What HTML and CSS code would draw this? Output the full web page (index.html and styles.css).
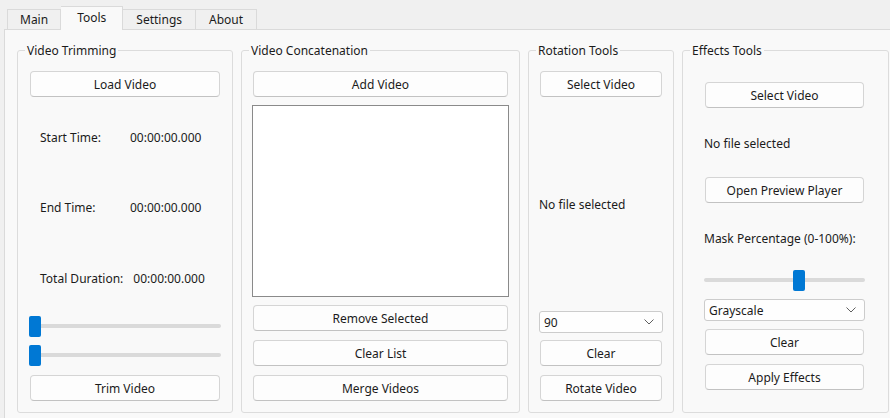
FILE: index.html
```html
<!DOCTYPE html>
<html lang="en">
<head>
  <meta charset="UTF-8" />
  <meta name="viewport" content="width=device-width, initial-scale=1.0"/>
  <title>Video Tools</title>
  <link rel="stylesheet" href="styles.css">
</head>
<body>
  <div class="window">
    <div class="tabbar">
      <div class="tab">Main</div>
      <div class="tab active">Tools</div>
      <div class="tab">Settings</div>
      <div class="tab">About</div>
    </div>

    <div class="pane">
      <div class="groups">

        <fieldset class="group g-trim">
          <legend>Video Trimming</legend>
          <div class="group-body">
            <div class="btn load">Load Video</div>
            <div class="time-row start"><span class="lbl">Start Time:</span><span>00:00:00.000</span></div>
            <div class="time-row end"><span class="lbl">End Time:</span><span>00:00:00.000</span></div>
            <div class="time-row total"><span class="lbl">Total Duration:</span><span>00:00:00.000</span></div>
            <div class="slider s1"><div class="groove"></div><div class="handle" style="left: 0px"></div></div>
            <div class="slider s2"><div class="groove"></div><div class="handle" style="left: 0px"></div></div>
            <div class="btn trim">Trim Video</div>
          </div>
        </fieldset>

        <fieldset class="group g-concat">
          <legend>Video Concatenation</legend>
          <div class="group-body">
            <div class="btn add">Add Video</div>
            <div class="list"></div>
            <div class="btn remove">Remove Selected</div>
            <div class="btn clear-list">Clear List</div>
            <div class="btn merge">Merge Videos</div>
          </div>
        </fieldset>

        <fieldset class="group g-rot">
          <legend>Rotation Tools</legend>
          <div class="group-body">
            <div class="btn select">Select Video</div>
            <div class="status">No file selected</div>
            <div class="combo">
              <span>90</span>
              <svg width="10" height="6" viewBox="0 0 10 6"><path d="M0.5 0.5 L5 5 L9.5 0.5" fill="none" stroke="#5f5f5f" stroke-width="1"/></svg>
            </div>
            <div class="btn clear">Clear</div>
            <div class="btn rotate">Rotate Video</div>
          </div>
        </fieldset>

        <fieldset class="group g-fx">
          <legend>Effects Tools</legend>
          <div class="group-body">
            <div class="btn select">Select Video</div>
            <div class="status">No file selected</div>
            <div class="btn preview">Open Preview Player</div>
            <div class="mask-label">Mask Percentage (0-100%):</div>
            <div class="slider mask"><div class="groove"></div><div class="handle" style="left: 89px"></div></div>
            <div class="combo">
              <span>Grayscale</span>
              <svg width="10" height="6" viewBox="0 0 10 6"><path d="M0.5 0.5 L5 5 L9.5 0.5" fill="none" stroke="#5f5f5f" stroke-width="1"/></svg>
            </div>
            <div class="btn clear">Clear</div>
            <div class="btn apply">Apply Effects</div>
          </div>
        </fieldset>

      </div>
    </div>
  </div>
</body>
</html>
```

FILE: styles.css
```css
html, body {
  margin: 0;
  background: #f0f0f0;
  font-family: "Noto Sans", "Open Sans", sans-serif;
  font-size: 12px;
  color: #1b1b1b;
}
.window {
  height: 418px;
  overflow: hidden;
  padding-top: 6px;
  box-sizing: border-box;
}

/* tabs */
.tabbar {
  display: flex;
  align-items: flex-end;
  height: 23px;
  padding-left: 7px;
  position: relative;
  z-index: 1;
}
.tab {
  height: 20px;
  line-height: 20px;
  padding: 0 13px;
  box-sizing: border-box;
  border: 1px solid #dadada;
  border-bottom: none;
  border-left: none;
  background: #f0f0f0;
}
.tab:first-child {
  border-left: 1px solid #dadada;
  padding: 0 12px;
}
.tab.active {
  height: 24px;
  line-height: 22px;
  margin-bottom: -1px;
  padding: 0 16px;
  background: #f9f9f9;
}

.pane {
  margin-left: 4px;
  border-top: 1px solid #dadada;
  border-left: 1px solid #dadada;
  background: #f9f9f9;
  height: 400px;
  padding: 12px 0 0 12px;
}
.groups {
  display: flex;
  gap: 8px;
  height: 371px;
}

/* group boxes */
.group {
  flex: none;
  margin: 0;
  padding: 0;
  min-width: 0;
  box-sizing: border-box;
  border: 1px solid #dcdcdc;
  border-radius: 3px;
}
.group legend {
  margin-left: 7px;
  padding: 0 2px;
  height: 16px;
  line-height: 17px;
}
.group-body {
  display: flex;
  flex-direction: column;
}
.g-trim { width: 216px; }
.g-concat { width: 279px; }
.g-rot { width: 146px; }
.g-fx { width: 207px; }

.g-trim .group-body { padding: 0 12px; }
.g-concat .group-body { padding: 0 11px; }
.g-rot .group-body { padding: 0 11px; }
.g-fx .group-body { padding: 0 24px 0 22px; }

/* controls */
.btn {
  height: 26px;
  box-sizing: border-box;
  border: 1px solid #d5d5d5;
  border-bottom-color: #c2c2c2;
  border-radius: 4px;
  background: #fdfdfd;
  display: flex;
  align-items: center;
  justify-content: center;
}
.time-row {
  display: flex;
  padding-left: 10px;
  height: 16px;
  line-height: 18px;
}
.time-row .lbl {
  min-width: 80px;
  padding-right: 10px;
}
.slider {
  position: relative;
  height: 21px;
  padding-top: 8px;
  box-sizing: border-box;
  margin: 0 -1px;
}
.groove {
  height: 4px;
  background: #dadada;
  border-radius: 2px;
}
.handle {
  position: absolute;
  top: 0;
  width: 12px;
  height: 21px;
  background: #0078d4;
  border-radius: 2px;
}
.list {
  height: 192px;
  box-sizing: border-box;
  border: 1px solid #8a8a8a;
  background: #fff;
  margin: 8px -1px 0;
}
.combo {
  height: 22px;
  box-sizing: border-box;
  border: 1px solid #cccccc;
  border-radius: 3px;
  background: #fefefe;
  display: flex;
  align-items: center;
  justify-content: space-between;
  padding: 0 8px 0 4px;
  margin: 0 -1px;
}
.status, .mask-label {
  height: 16px;
  line-height: 18px;
  margin-left: -1px;
}

/* vertical placement, trimming */
.g-trim .load { margin-top: 13px; }
.g-trim .start { margin-top: 32px; }
.g-trim .end { margin-top: 54px; }
.g-trim .total { margin-top: 55px; }
.g-trim .s1 { margin-top: 30px; }
.g-trim .s2 { margin-top: 8px; }
.g-trim .trim { margin-top: 9px; }

/* concatenation */
.g-concat .add { margin-top: 13px; }
.g-concat .remove { margin-top: 8px; }
.g-concat .clear-list { margin-top: 9px; }
.g-concat .merge { margin-top: 9px; }

/* rotation */
.g-rot .select { margin-top: 13px; }
.g-rot .status { margin-top: 99px; }
.g-rot .combo { margin-top: 99px; }
.g-rot .clear { margin-top: 7px; }
.g-rot .rotate { margin-top: 9px; }

/* effects */
.g-fx .select { margin-top: 24px; }
.g-fx .status { margin-top: 27px; }
.g-fx .preview { margin-top: 26px; }
.g-fx .mask-label { margin-top: 27px; }
.g-fx .mask { margin-top: 24px; }
.g-fx .combo { margin-top: 8px; }
.g-fx .clear { margin-top: 8px; }
.g-fx .apply { margin-top: 9px; }
```
